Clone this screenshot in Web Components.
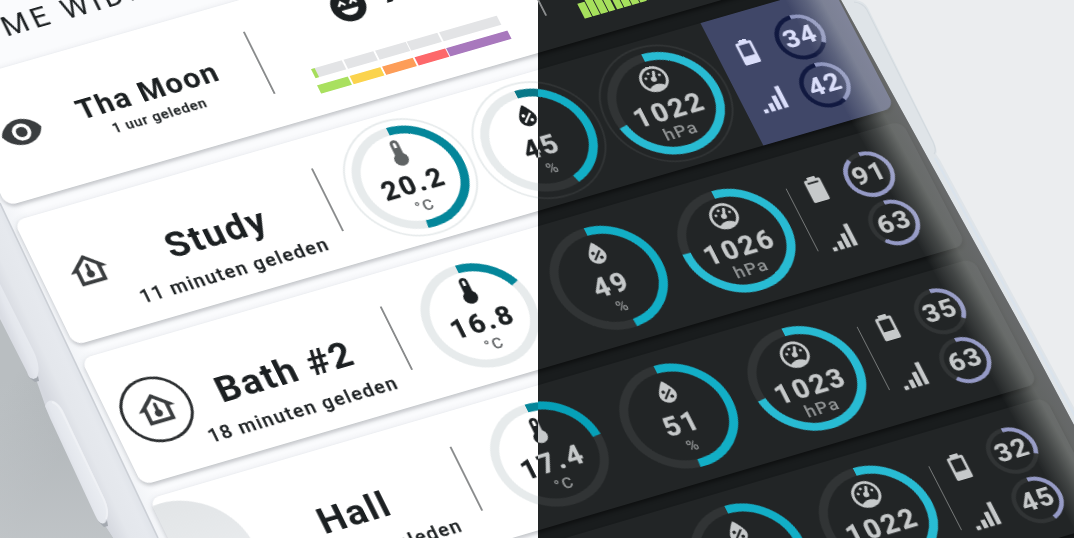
<!DOCTYPE html>
<html lang="nl">
<head>
<meta charset="utf-8">
<title>Wide cards</title>
<style>
html,body{margin:0;height:100%;overflow:hidden;background:#ebedef}
body{font-family:Roboto,"Liberation Sans",sans-serif}
</style>
</head>
<body>
<theme-showcase></theme-showcase>

<script>
const ICONS = {
  thermo:'<path d="M15 13V5A3 3 0 0 0 9 5V13A5 5 0 1 0 15 13M12 4A1 1 0 0 1 13 5V8H11V5A1 1 0 0 1 12 4Z"/>',
  water:'<path fill-rule="evenodd" d="M12,3.25C12,3.25 6,10 6,14C6,17.32 8.69,20 12,20A6,6 0 0,0 18,14C18,10 12,3.25 12,3.25M14.47,9.97L15.53,11.03L9.53,17.03L8.47,15.97L14.47,9.97M9.75,10A1.25,1.25 0 0,1 11,11.25A1.25,1.25 0 0,1 9.75,12.5A1.25,1.25 0 0,1 8.5,11.25A1.25,1.25 0 0,1 9.75,10M14.25,14.5A1.25,1.25 0 0,1 15.5,15.75A1.25,1.25 0 0,1 14.25,17A1.25,1.25 0 0,1 13,15.75A1.25,1.25 0 0,1 14.25,14.5Z"/>',
  gauge:'<path fill-rule="evenodd" d="M12,2A10,10 0 0,0 2,12A10,10 0 0,0 12,22A10,10 0 0,0 22,12A10,10 0 0,0 12,2M12,4A8,8 0 0,1 20,12C20,14.4 19,16.5 17.3,18C15.9,16.7 14,16 12,16C10,16 8.2,16.7 6.7,18C5,16.5 4,14.4 4,12A8,8 0 0,1 12,4Z"/><circle cx="12" cy="12" r="2"/><path d="M13.1 6.5A1 1 0 0 1 15 7.3L13 12.3L11.2 11.6Z"/><circle cx="10" cy="7" r="1"/><circle cx="7" cy="10" r="1"/><circle cx="17" cy="10" r="1"/>',
  eye:'<path d="M12,9A3,3 0 0,0 9,12A3,3 0 0,0 12,15A3,3 0 0,0 15,12A3,3 0 0,0 12,9M12,17A5,5 0 0,1 7,12A5,5 0 0,1 12,7A5,5 0 0,1 17,12A5,5 0 0,1 12,17M12,4.5C7,4.5 2.73,7.61 1,12C2.73,16.39 7,19.5 12,19.5C17,19.5 21.27,16.39 23,12C21.27,7.61 17,4.5 12,4.5Z"/>',
  home:'<path fill-rule="evenodd" d="M12 3L2 12H5V20H19V12H22L12 3M12 5.69L17 10.19V18H7V10.19L12 5.69Z"/><path d="M11.1 9.2A.9 .9 0 0 1 12.9 9.2V12.6A2.1 2.1 0 1 1 11.1 12.6Z"/>',
  happy:'<path fill-rule="evenodd" d="M12 2A10 10 0 1 0 12 22A10 10 0 1 0 12 2M7 14H17C16.4 16.6 14.4 18 12 18C9.6 18 7.6 16.6 7 14M6 10.9L8.6 7.8L11.2 10.9L10.1 11.6L8.6 9.9L7.1 11.6ZM12.8 10.9L15.4 7.8L18 10.9L16.9 11.6L15.4 9.9L13.9 11.6Z"/>',
  signal:'<path d="M2.6 17.6H5.7V20.8H2.6ZM7.6 14.3H10.9V20.8H7.6ZM12.4 9.4H15.7V20.8H12.4ZM17.4 3H20.7V20.8H17.4Z"/>'
};
const battery = lvl => {
  const y = 6 + 14 * (100 - lvl) / 100;
  return `<path fill-rule="evenodd" d="M16 ${y.toFixed(1)}H8V6H16M16.67,4H15V2H9V4H7.33A1.33,1.33 0 0,0 6,5.33V20.67C6,21.4 6.6,22 7.33,22H16.67A1.33,1.33 0 0,0 18,20.67V5.33C18,4.6 17.4,4 16.67,4Z"/>`;
};

class Shadowed extends HTMLElement {
  render(css, html){
    if(!this.shadowRoot) this.attachShadow({mode:'open'});
    this.shadowRoot.innerHTML = `<style>${css}</style>${html}`;
  }
  a(n,d=''){ return this.getAttribute(n) ?? d; }
}

customElements.define('mdi-icon', class extends Shadowed {
  connectedCallback(){
    const n = this.a('name'), s = this.a('size','36');
    this.render(`:host{display:block;width:${s}px;height:${s}px}svg{display:block;fill:currentColor}`,
      `<svg width="${s}" height="${s}" viewBox="0 0 24 24">${n==='battery'?battery(+this.a('level')):ICONS[n]}</svg>`);
  }
});

/* Circular gauge: arc starts at twelve o'clock and runs clockwise by `deg`. */
customElements.define('ring-gauge', class extends Shadowed {
  connectedCallback(){
    const r = +this.a('r','59'), w = +this.a('w','9'), deg = +this.a('deg','180');
    const m = r - w/2, t = deg*Math.PI/180, box = r*2;
    const x = r + m*Math.sin(t), y = r - m*Math.cos(t);
    this.render(`
      :host{display:grid;width:${box}px;height:${box}px;position:relative;color:var(--ink)}
      svg,.in{grid-area:1/1}
      svg{overflow:visible;display:block}
      .in{display:flex;flex-direction:column;align-items:center;justify-content:center}`,
      `<svg width="${box}" height="${box}" fill="none">
        <circle cx="${r}" cy="${r}" r="${m}" stroke="var(--track)" stroke-width="${w}"/>
        ${this.hasAttribute('halo')?`<circle cx="${r}" cy="${r}" r="${r+7.6}" stroke="var(--track)" stroke-width="2"/>`:''}
        <path d="M${r} ${w/2}A${m} ${m} 0 ${deg>180?1:0} 1 ${x} ${y}" stroke="${this.a('color','#03879b')}" stroke-width="${w}"/>
      </svg><div class="in"><slot></slot></div>`);
  }
});

customElements.define('sensor-dial', class extends Shadowed {
  connectedCallback(){
    const unit = this.a('unit');
    this.render(`
      :host{display:flex;justify-content:center;align-items:center}
      mdi-icon{margin-top:2px;color:${this.a('tone','inherit')}}
      .v{font:700 29px/28px Roboto,sans-serif;letter-spacing:2.4px;margin:5px 1px 0 0;-webkit-text-stroke:.3px currentColor}
      .u{font:500 ${unit==='hPa'?19:unit==='%'?16:17}px/20px Roboto,sans-serif;letter-spacing:1.2px;margin:2px 0 0 0;color:var(--unit);height:24px}`,
      `<ring-gauge deg="${this.a('deg')}" color="${this.a('color')}" ${this.hasAttribute('halo')?'halo':''}>
        <mdi-icon name="${this.a('icon')}" size="36"></mdi-icon>
        <div class="v">${this.a('value')}</div><div class="u">${unit}</div></ring-gauge>`);
  }
});

customElements.define('status-panel', class extends Shadowed {
  connectedCallback(){
    const b = +this.a('battery'), s = +this.a('signal'), c = this.a('ring','#959ac6');
    this.render(`
      :host{display:grid;grid-template-columns:64px 52px;grid-template-rows:58px 58px;align-content:center;justify-items:center;align-items:center;
        box-sizing:border-box;position:relative;color:var(--ink)}
      :host([selected]){background:#404768;--ink:#dadefa;--track:#111940;margin-left:2px}
      :host(:not([selected]))::before{content:"";position:absolute;left:2px;top:36px;height:75px;width:1.4px;background:#737676}
      .n{font:700 28.5px/28px Roboto,sans-serif;letter-spacing:1px;-webkit-text-stroke:.2px currentColor}`,
      `<mdi-icon name="battery" level="${b}" size="35"></mdi-icon>
       <ring-gauge r="26" w="4.6" deg="${b*3.6}" color="${c}"><div class="n">${b}</div></ring-gauge>
       <mdi-icon name="signal" size="35"></mdi-icon>
       <ring-gauge r="26" w="4.6" deg="${s*3.6}" color="${c}"><div class="n">${s}</div></ring-gauge>`);
  }
});

customElements.define('room-name', class extends Shadowed {
  connectedCallback(){
    const small = this.hasAttribute('small');
    this.render(`
      :host{display:flex;flex-direction:column;align-items:center;justify-content:center;color:#1c2022;white-space:nowrap}
      .t{font:700 ${small?31.5:39}px/${small?30:42}px Roboto,sans-serif;letter-spacing:${small?1.5:1.7}px;margin-top:${small?18:36}px;margin-left:${small?3:0}px}
      .s{font:500 ${small?15:20}px/24px Roboto,sans-serif;letter-spacing:${small?.9:1.6}px;margin-top:${small?2:11}px;margin-left:${small?3:0}px;-webkit-text-stroke:.25px currentColor}`,
      `<div class="t">${this.a('name')}</div><div class="s">${this.a('ago')}</div>`);
  }
});

customElements.define('state-icon', class extends Shadowed {
  connectedCallback(){
    this.render(`
      :host{display:flex;align-items:center;justify-content:center;color:#3a3d3f;padding-left:6px}
      .b{width:74px;height:74px;box-sizing:border-box;border-radius:50%;display:flex;align-items:center;justify-content:center;flex:none}
      :host([ringed]) .b{border:3.8px solid #2c2f31}
      :host([blob]) .b{width:142px;height:142px;background:linear-gradient(#e2e5e7,#eff1f3);margin:8px 0 0 -82px}
      :host([blob]) mdi-icon{margin-left:76px}`,
      `<div class="b"><mdi-icon name="${this.a('icon')}" size="47"></mdi-icon></div>`);
  }
});

customElements.define('rule-line', class extends Shadowed {
  connectedCallback(){
    this.render(`:host{display:block;width:1.6px;height:75px;align-self:center;justify-self:start;margin:-2px 0 0 25px;background:#8a8c8d}`,'');
  }
});

customElements.define('moon-scale', class extends Shadowed {
  connectedCallback(){
    this.render(`
      :host{display:flex;flex-direction:column;align-items:flex-start;color:#1c2022}
      .h{display:flex;gap:12px;height:93px;margin-left:45px}
      .h mdi-icon{margin-top:17px}
      .d{font:700 44px/44px Roboto,sans-serif;margin-top:11px}
      .r{display:grid;grid-template-columns:repeat(4,33.6px) 64px;gap:1.8px;height:11px;margin-top:2px}
      .r i{display:block;background:#e3e4e6}
      .q{grid-template-columns:repeat(4,34px) 67.5px;height:9.5px;margin:8px 0 0 -2px}`,
      `<div class="h"><mdi-icon name="happy" size="44"></mdi-icon><div class="d">7</div></div>
       <div class="r"><i style="background:linear-gradient(90deg,#a6dd5b 4.5px,#e3e4e6 4.5px)"></i><i></i><i></i><i></i><i></i></div>
       <div class="r q"><i style="background:#a9e05f"></i><i style="background:#fbd34d"></i><i style="background:#fd9d58"></i><i style="background:#fd686a"></i><i style="background:#a878bd"></i></div>`);
  }
});

customElements.define('bar-history', class extends Shadowed {
  connectedCallback(){
    const hs=[18,20,22,25,27,29,33,36,38];
    this.render(`
      :host{display:flex;align-items:flex-end;gap:1.2px;height:125px}
      i{display:block;width:7.6px;background:#a6e05c}`,
      hs.map(h=>`<i style="height:${h}px"></i>`).join(''));
  }
});

customElements.define('wide-card', class extends Shadowed {
  connectedCallback(){
    this.render(`
      :host{display:grid;grid-template-columns:92px 194px 46.2px 141.6px 141.6px 141.6px 148px;
        height:148.5px;margin-left:-4px;width:905px;border-radius:11px;overflow:clip;background:var(--card);box-shadow:var(--lift)}
      :host([first]){height:146.5px;margin-bottom:2px}
      ::slotted([at="icon"]){grid-column:1}
      ::slotted([at="name"]){grid-column:2}
      ::slotted([at="rule"]){grid-column:3}
      ::slotted([at="1"]){grid-column:4}
      ::slotted([at="2"]){grid-column:5}
      ::slotted([at="3"]){grid-column:6}
      ::slotted([at="status"]){grid-column:7}
      ::slotted(*){grid-row:1}`,'<slot></slot>');
  }
});

/* Lays its content on a plane and tilts it: board points are projected to window points. */
const ANCHORS = [
  [399,298.9,409.5,177.7],[540.6,298.9,538,141.6],[682.2,298.9,666,105],
  [399,463.6,478.7,315.3],[540.6,463.6,608,277.7],[682.2,463.6,736,240.2],
  [399,628.3,548.8,455.8],[540.6,628.3,679,416.3],[682.2,628.3,806.8,377.2],
  [682.2,793,879.2,516.3],[44,463.6,156.5,409.7],[898,373,893.5,107],
  [44,298.9,90,271],[44,134.2,22,131.5],[-4,208.5,5,205],[-4,373.2,74,345],[-4,538,142,487]
];
function homography(pts){
  const n=8, A=Array.from({length:n},()=>new Float64Array(n+1));
  const S=500;
  const add=(r,b)=>{for(let i=0;i<n;i++){for(let j=0;j<n;j++)A[i][j]+=r[i]*r[j];A[i][n]+=r[i]*b;}};
  for(const [x0,y0,X0,Y0] of pts){
    const x=x0/S,y=y0/S,X=X0/S,Y=Y0/S;
    add([x,y,1,0,0,0,-x*X,-y*X],X); add([0,0,0,x,y,1,-x*Y,-y*Y],Y);
  }
  for(let i=0;i<n;i++){
    let p=i; for(let k=i+1;k<n;k++) if(Math.abs(A[k][i])>Math.abs(A[p][i])) p=k;
    [A[i],A[p]]=[A[p],A[i]];
    for(let k=0;k<n;k++) if(k!==i){const f=A[k][i]/A[i][i];for(let j=i;j<=n;j++)A[k][j]-=f*A[i][j];}
  }
  const h=A.map((r,i)=>r[n]/r[i]);
  return [h[0],h[1],h[2]*S,h[3],h[4],h[5]*S,h[6]/S,h[7]/S];
}
const H = homography(ANCHORS);

customElements.define('tilted-board', class extends Shadowed {
  connectedCallback(){
    const [a,b,c,d,e,f,g,h]=H, s=+this.a('shift','0');
    this.render(`
      :host{display:block;position:absolute;left:0;top:0;width:898px;transform-origin:0 0;
        transform:translateX(${-s}px) matrix3d(${[a,d,0,g,b,e,0,h,0,0,1,0,c,f,0,1].join(',')})}
      .title{font:400 32px/34px Roboto,sans-serif;letter-spacing:4px;height:60px;color:#1f2325;padding-left:27px;box-sizing:border-box;white-space:nowrap}
      .list{display:flex;flex-direction:column;gap:16.2px}`,
      `<div class="title">${this.a('heading')}</div><div class="list"><slot></slot></div>`);
  }
});

customElements.define('light-half', class extends Shadowed {
  connectedCallback(){
    this.render(`
      :host{display:block;position:relative;overflow:hidden;--card:#fff;--lift:0 3px 4px rgba(60,64,70,.25),0 0 7px rgba(60,70,90,.1);
        --ink:#1c2022;--unit:#66696b;--track:#e7ebec;background:#fafbfd}
      svg.bg{position:absolute;inset:0}`,
    `<svg class="bg" width="538" height="538">
      <defs>
        <linearGradient id="room" gradientUnits="userSpaceOnUse" x1="0" y1="400" x2="70" y2="440"><stop offset="0" stop-color="#b9bec1"/><stop offset="1" stop-color="#afb4b7"/></linearGradient>
        <linearGradient id="rm2" gradientUnits="userSpaceOnUse" x1="0" y1="380" x2="0" y2="538"><stop offset="0" stop-color="#c4c8cc" stop-opacity="0"/><stop offset="1" stop-color="#c6cacd" stop-opacity=".7"/></linearGradient>
        <linearGradient id="bez" gradientUnits="userSpaceOnUse" x1="35" y1="372" x2="78" y2="352"><stop offset="0" stop-color="#d5d8df"/><stop offset=".35" stop-color="#e4e7ec"/><stop offset=".7" stop-color="#e6e9ee"/><stop offset=".93" stop-color="#dee2e8"/><stop offset="1" stop-color="#d3d7dd"/></linearGradient>
        <linearGradient id="glass" gradientUnits="userSpaceOnUse" x1="79" y1="366" x2="96" y2="358"><stop offset="0" stop-color="#f3f5f8"/><stop offset="1" stop-color="#fafbfd"/></linearGradient>
        <linearGradient id="btn" gradientUnits="userSpaceOnUse" x1="68" y1="468" x2="84" y2="461"><stop offset="0" stop-color="#d9dce3"/><stop offset=".45" stop-color="#e4e7ed"/><stop offset="1" stop-color="#e9ecf1"/></linearGradient>
      </defs>
      <path d="M0 160V203L158 538H300Z" fill="url(#glass)"/>
      <path d="M0 203L158 538H0Z" fill="url(#bez)"/>
      <path d="M0 203L158 538" stroke="#ccd0d6" stroke-width="1.6"/>
      <path d="M0 291L37 382L46 408L104 524L113 538H0Z" fill="url(#room)"/>
      <path d="M0 291L37 382L46 408L104 524L113 538H0Z" fill="url(#rm2)"/>
      <path d="M0 284L34 352Q42 370 36 378Q30 382 27 372L0 319Z" fill="url(#btn)"/>
      <path d="M27 376Q35 382 38 376L39 381L35 382Z" fill="#a4a9b0"/>
      <path d="M45 406Q49 397 57 403Q62 407 66 417L105 500Q111 514 104 523Q100 526 95 515L50 418Z" fill="url(#btn)"/>
      <path d="M52 402Q59 404 64 416L104 500Q109 512 106 519" fill="none" stroke="#eff1f5" stroke-width="2"/>
      <path d="M98 521Q104 527 107 520L108 526L104 527Z" fill="#a4a9b0"/>
    </svg>
    <tilted-board heading="SOME WIDE">
      <wide-card first>
        <state-icon at="icon" icon="eye"></state-icon>
        <room-name at="name" small name="Tha Moon" ago="1 uur geleden"></room-name>
        <rule-line at="rule"></rule-line>
        <moon-scale at="1" style="margin-left:27px"></moon-scale>
        <rule-line at="3" style="margin-left:-3px"></rule-line>
      </wide-card>
      <wide-card>
        <state-icon at="icon" icon="home"></state-icon>
        <room-name at="name" name="Study" ago="11 minuten geleden"></room-name>
        <rule-line at="rule"></rule-line>
        <sensor-dial at="1" halo icon="thermo" tone="#5f6364" value="20.2" unit="°C" deg="187" color="#04869a"></sensor-dial>
        <sensor-dial at="2" halo icon="water" value="45" unit="%" deg="162" color="#087888"></sensor-dial>
      </wide-card>
      <wide-card>
        <state-icon at="icon" ringed icon="home"></state-icon>
        <room-name at="name" name="Bath #2" ago="18 minuten geleden"></room-name>
        <rule-line at="rule"></rule-line>
        <sensor-dial at="1" icon="thermo" value="16.8" unit="°C" deg="65" color="#04869a"></sensor-dial>
      </wide-card>
      <wide-card>
        <state-icon at="icon" blob icon="home"></state-icon>
        <room-name at="name" name="Hall" ago="8 minuten geleden"></room-name>
        <rule-line at="rule"></rule-line>
        <sensor-dial at="1" icon="thermo" value="17.4" unit="°C" deg="85" color="#04869a"></sensor-dial>
      </wide-card>
    </tilted-board>`);
  }
});

customElements.define('dark-half', class extends Shadowed {
  connectedCallback(){
    this.render(`
      :host{display:block;position:relative;overflow:hidden;--card:#222526;--lift:0 3px 4px rgba(0,0,0,.45);
        --ink:#c6c9ca;--unit:#919495;--track:#313435;background:#ebedef}
      svg{position:absolute;inset:0}
      .screen{position:absolute;inset:0;background:#191c1d;clip-path:polygon(0 0,303px 0,391px 160px,488px 335px,536px 425px,536px 538px,0 538px)}`,
    `<svg width="536" height="538">
      <path d="M310 0H318Q326 1 330 8L396 142Q400 152 398 154L402 160L545 424V470L303 0Z" fill="#dfe4e8"/>
      <path d="M316 2Q325 3 329 10L395 142Q399 151 396 154" fill="none" stroke="#d3dadf" stroke-width="1.1"/>
      <path d="M397 158L538 418" stroke="#dae3ec" stroke-width="2.4"/>
    </svg>
    <div class="screen">
      <tilted-board shift="538" heading="">
        <wide-card first>
          <bar-history at="3" style="margin-left:34px"></bar-history>
          <rule-line at="3" style="margin-left:-3px"></rule-line>
        </wide-card>
        <wide-card>
          <sensor-dial at="2" halo icon="water" value="45" unit="%" deg="162" color="#12aec6"></sensor-dial>
          <sensor-dial at="3" halo icon="gauge" value="1022" unit="hPa" deg="257.5" color="#28bbd3"></sensor-dial>
          <status-panel at="status" selected battery="34" signal="42" ring="#8f96bf"></status-panel>
        </wide-card>
        <wide-card>
          <sensor-dial at="2" icon="water" value="49" unit="%" deg="176.4" color="#12aec6"></sensor-dial>
          <sensor-dial at="3" icon="gauge" value="1026" unit="hPa" deg="271.5" color="#28bbd3"></sensor-dial>
          <status-panel at="status" battery="91" signal="63"></status-panel>
        </wide-card>
        <wide-card>
          <sensor-dial at="1" icon="thermo" value="17.4" unit="°C" deg="85" color="#06a0b8"></sensor-dial>
          <sensor-dial at="2" icon="water" value="51" unit="%" deg="183.6" color="#12aec6"></sensor-dial>
          <sensor-dial at="3" icon="gauge" value="1023" unit="hPa" deg="261" color="#28bbd3"></sensor-dial>
          <status-panel at="status" battery="35" signal="63"></status-panel>
        </wide-card>
        <wide-card>
          <sensor-dial at="2" icon="water" value="50" unit="%" deg="180" color="#12aec6"></sensor-dial>
          <sensor-dial at="3" icon="gauge" value="1022" unit="hPa" deg="257.5" color="#28bbd3"></sensor-dial>
          <status-panel at="status" battery="32" signal="45"></status-panel>
        </wide-card>
      </tilted-board>
      <svg width="536" height="538">
        <defs><linearGradient id="sheen" gradientUnits="userSpaceOnUse" x1="391" y1="160" x2="347" y2="184">
          <stop offset="0" stop-color="#fff" stop-opacity=".34"/><stop offset=".35" stop-color="#f2f5ee" stop-opacity=".34"/><stop offset=".65" stop-color="#eef2ea" stop-opacity=".16"/><stop offset="1" stop-color="#eef2ea" stop-opacity="0"/></linearGradient></defs>
        <path d="M200 0H536V538H440Z" fill="url(#sheen)"/>
      </svg>
    </div>`);
  }
});

customElements.define('theme-showcase', class extends Shadowed {
  connectedCallback(){
    this.render(`:host{display:grid;grid-template-columns:538px 536px;width:1074px;height:538px;overflow:hidden}`,
      `<light-half></light-half><dark-half></dark-half>`);
  }
});
</script>
</body>
</html>
